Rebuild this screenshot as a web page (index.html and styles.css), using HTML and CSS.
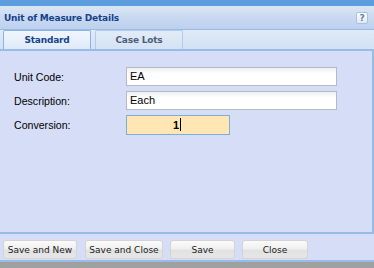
FILE: index.html
```html
<!DOCTYPE html>
<html>
<head>
<meta charset="utf-8">
<link rel="stylesheet" href="styles.css">
</head>
<body>
<div class="win">
  <div class="topbar"></div>
  <div class="titlebar">
    <span class="title">Unit of Measure Details</span>
    <span class="help">?</span>
  </div>
  <div class="tabstrip">
    <div class="tab active">Standard</div>
    <div class="tab">Case Lots</div>
  </div>
  <div class="body">
    <div class="row">
      <label class="lbl">Unit Code:</label>
      <div class="input">EA</div>
    </div>
    <div class="row">
      <label class="lbl">Description:</label>
      <div class="input">Each</div>
    </div>
    <div class="row">
      <label class="lbl">Conversion:</label>
      <div class="input num">1<span class="caret"></span></div>
    </div>
  </div>
  <div class="buttons">
    <button class="btn b1">Save and New</button>
    <button class="btn b2">Save and Close</button>
    <button class="btn b3">Save</button>
    <button class="btn b4">Close</button>
  </div>
  <div class="bottomgray"></div>
</div>
</body>
</html>
```
FILE: styles.css
```css
html, body {
  margin: 0;
  padding: 0;
  width: 374px;
  height: 268px;
  overflow: hidden;
  background: #d6ddf7;
  font-family: "Liberation Sans", Arial, sans-serif;
}
.win {
  display: flex;
  flex-direction: column;
  width: 374px;
  height: 268px;
}
.topbar {
  height: 6px;
  background: #5c9ddf;
  flex: none;
}
.titlebar {
  flex: none;
  display: flex;
  align-items: center;
  justify-content: space-between;
  padding: 0 6px 0 4px;
  background: linear-gradient(#dbe7f5, #cbdaf1 45%, #bcd0ee);
  border-bottom: 1px solid #99bbe8;
  box-sizing: border-box;
  height: 24px;
}
.title {
  font-family: "DejaVu Sans", sans-serif;
  font-weight: bold;
  font-size: 9px;
  letter-spacing: -0.2px;
  color: #15428b;
}
.help {
  width: 10px;
  height: 10px;
  border: 1px solid #a9c3e6;
  border-radius: 2px;
  background: linear-gradient(#ffffff, #dfe9f6);
  font-family: "DejaVu Sans", sans-serif;
  font-weight: bold;
  font-size: 9px;
  line-height: 10px;
  text-align: center;
  color: #5a7fb8;
  margin-top: 1px;
}
.tabstrip {
  flex: none;
  height: 21px;
  box-sizing: border-box;
  display: flex;
  align-items: flex-end;
  gap: 4px;
  padding: 0 0 0 3px;
  background: linear-gradient(#e0eaf7, #d3e1f4);
  border-bottom: 2px solid #99bbe8;
}
.tab {
  width: 88px;
  height: 19px;
  box-sizing: border-box;
  border: 1px solid #b4cbe9;
  border-bottom: none;
  border-radius: 2px 2px 0 0;
  background: linear-gradient(#e2ecf8, #d4e2f4);
  font-family: "DejaVu Sans", sans-serif;
  font-weight: bold;
  font-size: 9px;
  letter-spacing: -0.2px;
  line-height: 18px;
  text-align: center;
  color: #4d5d79;
}
.tab.active {
  background: linear-gradient(#f1f6fd, #deeafa);
  border-color: #8db2e3;
  color: #15428b;
}
.body {
  flex: none;
  height: 183px;
  box-sizing: border-box;
  border-right: 2px solid #99bbe8;
  border-bottom: 2px solid #99bbe8;
  padding: 16px 0 0 14px;
  display: flex;
  flex-direction: column;
  gap: 5px;
}
.row {
  display: flex;
  align-items: center;
  height: 19px;
}
.lbl {
  width: 112px;
  font-size: 10.6px;
  color: #000;
}
.input {
  width: 211px;
  height: 19px;
  box-sizing: border-box;
  border: 1px solid #b5b8c8;
  background: linear-gradient(#eef0f0, #ffffff 6px);
  font-size: 11px;
  line-height: 17px;
  padding-left: 3px;
  color: #000;
}
.input.num {
  width: 104px;
  height: 20px;
  background: #ffe6b3;
  border-color: #7eadd9;
  text-align: right;
  padding-right: 48px;
  font-weight: bold;
  line-height: 18px;
}
.caret {
  display: inline-block;
  width: 1px;
  height: 13px;
  background: #000;
  vertical-align: -2px;
  margin-left: 1px;
}
.buttons {
  flex: none;
  height: 28px;
  box-sizing: border-box;
  border-bottom: 2px solid #99bbe8;
  display: flex;
  align-items: flex-start;
  padding: 6px 0 0 3px;
  gap: 7px;
}
.btn {
  height: 19px;
  box-sizing: border-box;
  border: 1px solid #d4d4d4;
  border-radius: 3px;
  background: linear-gradient(#fbfbfb, #f0f0f0 45%, #e2e2e2 55%, #e6e6e6);
  font-family: "DejaVu Sans", sans-serif;
  font-size: 9px;
  white-space: nowrap;
  color: #1a1a1a;
  padding: 0;
  margin: 0;
}
.b1 { width: 74px; }
.b2 { width: 78px; margin-left: 1px; }
.b3 { width: 65px; }
.b4 { width: 66px; }
.bottomgray {
  flex: 1;
  background: #a0a0a0;
}
```
